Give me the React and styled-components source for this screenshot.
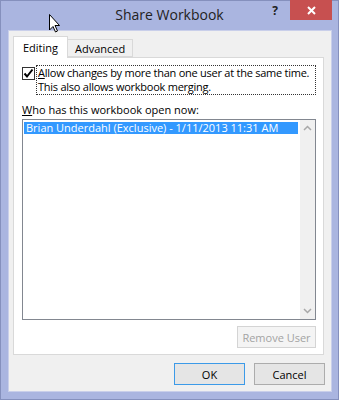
import styled, { createGlobalStyle } from "styled-components";

const GlobalStyle = createGlobalStyle`
  html, body {
    margin: 0;
    padding: 0;
    background: #ffffff;
  }
  * {
    box-sizing: border-box;
  }
`;

const Window = styled.div`
  position: relative;
  width: 339px;
  height: 400px;
  background: #aab5e0;
  border: 1px solid #8590bd;
  display: flex;
  flex-direction: column;
  font-family: "Open Sans", "Noto Sans", sans-serif;
  font-size: 11px;
  color: #000;
`;

const TitleBar = styled.div`
  height: 29px;
  display: flex;
  align-items: flex-start;
  position: relative;
`;

const Title = styled.div`
  flex: 1;
  text-align: center;
  font-size: 14px;
  line-height: 28px;
  color: #222;
  padding-left: 78px;
`;

const Help = styled.div`
  width: 30px;
  text-align: center;
  font-weight: 700;
  font-size: 12px;
  line-height: 20px;
  color: #222;
`;

const CloseButton = styled.div`
  width: 42px;
  height: 20px;
  margin-top: -1px;
  margin-right: 6px;
  background: #c75050;
  color: #fff;
  display: flex;
  align-items: center;
  justify-content: center;
`;

const Client = styled.div`
  flex: 1;
  margin: 0 6px 7px 7px;
  background: #f0f0f0;
  border: 1px solid #c9cfea;
  padding: 5px 6px 6px 4px;
  display: flex;
  flex-direction: column;
`;

const TabRow = styled.div`
  display: flex;
  align-items: flex-end;
  height: 21px;
  position: relative;
  z-index: 1;
`;

const Tab = styled.div`
  height: ${(p) => (p.$active ? "22px" : "18px")};
  padding: 0 ${(p) => (p.$active ? "9px" : "7px")};
  background: ${(p) => (p.$active ? "#ffffff" : "#f0f0f0")};
  border: 1px solid #d9d9d9;
  border-bottom: ${(p) => (p.$active ? "none" : "1px solid #d9d9d9")};
  margin-left: ${(p) => (p.$active ? "0" : "-1px")};
  display: flex;
  align-items: center;
  line-height: 1;
  margin-bottom: ${(p) => (p.$active ? "-1px" : "0")};
`;

const Panel = styled.div`
  background: #ffffff;
  border: 1px solid #d9d9d9;
  width: 311px;
  height: 298px;
  padding: 7px 7px 6px 8px;
  display: flex;
  flex-direction: column;
`;

const CheckRow = styled.div`
  display: flex;
  align-items: flex-start;
`;

const CheckBox = styled.div`
  width: 13px;
  height: 13px;
  margin-top: 2px;
  border: 1px solid #333;
  background: #fff;
  display: flex;
  align-items: center;
  justify-content: center;
  flex-shrink: 0;
`;

const CheckLabel = styled.div`
  margin-left: 1px;
  width: 280px;
  border: 1px dotted #333;
  padding: 0 2px 0 1px;
  line-height: 14px;
  white-space: nowrap;
  letter-spacing: -0.25px;
`;

const Key = styled.span`
  text-decoration: underline;
`;

const ListCaption = styled.div`
  margin-top: 8px;
  line-height: 14px;
`;

const ListBox = styled.div`
  margin-top: 2px;
  height: 202px;
  width: 294px;
  border: 1px solid #828790;
  display: flex;
  padding: 2px 0 0 1px;
  background: #fff;
`;

const Rows = styled.div`
  flex: 1;
`;

const Row = styled.div`
  height: 12px;
  line-height: 12px;
  padding-left: 2px;
  margin-right: 2px;
  background: ${(p) => (p.$selected ? "#3399ff" : "transparent")};
  color: ${(p) => (p.$selected ? "#fff" : "#000")};
  white-space: nowrap;
`;

const ScrollBar = styled.div`
  width: 15px;
  margin-top: -2px;
  background: #f0f0f0;
  display: flex;
  flex-direction: column;
  justify-content: space-between;
  align-items: center;
  padding: 5px 0 5px;
`;

const ActionRow = styled.div`
  display: flex;
  justify-content: flex-end;
  gap: 9px;
  margin-top: ${(p) => p.$gap || "0"};
`;

const Button = styled.div`
  width: ${(p) => p.$width || "71px"};
  height: 22px;
  border: 1px solid ${(p) => (p.$default ? "#3c9ae8" : p.$disabled ? "#d4d4d4" : "#acacac")};
  background: ${(p) => (p.$disabled ? "#f4f4f4" : "#e5e5e5")};
  color: ${(p) => (p.$disabled ? "#a3a3a3" : "#000")};
  display: flex;
  align-items: center;
  justify-content: center;
`;

const Footer = styled.div`
  flex: 1;
  display: flex;
  align-items: flex-end;
  justify-content: flex-end;
  gap: 9px;
`;

const Cursor = styled.svg`
  position: absolute;
  left: 47px;
  top: 12px;
`;

const Chevron = ({ up }) => (
  <svg width="9" height="6" viewBox="0 0 9 6">
    <path
      d={up ? "M1 5 L4.5 1.5 L8 5" : "M1 1 L4.5 4.5 L8 1"}
      fill="none"
      stroke="#a8a8a8"
      strokeWidth="1.5"
    />
  </svg>
);

const App = () => {
  return (
    <>
      <GlobalStyle />
      <Window>
        <TitleBar>
          <Title>Share Workbook</Title>
          <Help>?</Help>
          <CloseButton>
            <svg width="9" height="9" viewBox="0 0 9 9">
              <path d="M1 1 L8 8 M8 1 L1 8" stroke="#fff" strokeWidth="2" />
            </svg>
          </CloseButton>
        </TitleBar>
        <Client>
          <TabRow>
            <Tab $active>Editing</Tab>
            <Tab>Advanced</Tab>
          </TabRow>
          <Panel>
            <CheckRow>
              <CheckBox>
                <svg width="11" height="11" viewBox="0 0 11 11">
                  <path d="M1.5 5.5 L4 8.5 L9.5 1.5" fill="none" stroke="#000" strokeWidth="2" />
                </svg>
              </CheckBox>
              <CheckLabel>
                <Key>A</Key>llow changes by more than one user at the same time.
                <br />
                This also allows workbook merging.
              </CheckLabel>
            </CheckRow>
            <ListCaption>
              <Key>W</Key>ho has this workbook open now:
            </ListCaption>
            <ListBox>
              <Rows>
                <Row $selected>Brian Underdahl (Exclusive) - 1/11/2013 11:31 AM</Row>
              </Rows>
              <ScrollBar>
                <Chevron up />
                <Chevron />
              </ScrollBar>
            </ListBox>
            <ActionRow $gap="6px">
              <Button $disabled $width="79px">Remove User</Button>
            </ActionRow>
          </Panel>
          <Footer>
            <Button $default>OK</Button>
            <Button>Cancel</Button>
          </Footer>
        </Client>
        <Cursor width="13" height="21" viewBox="0 0 13 21">
          <path
            d="M1.5 1.5 L1.5 17 L5 13.5 L7.5 19 L9.5 18 L7 12.5 L11.5 12.5 Z"
            fill="#fff"
            stroke="#000"
            strokeWidth="1"
            strokeLinejoin="round"
          />
        </Cursor>
      </Window>
    </>
  );
};

export default App;
